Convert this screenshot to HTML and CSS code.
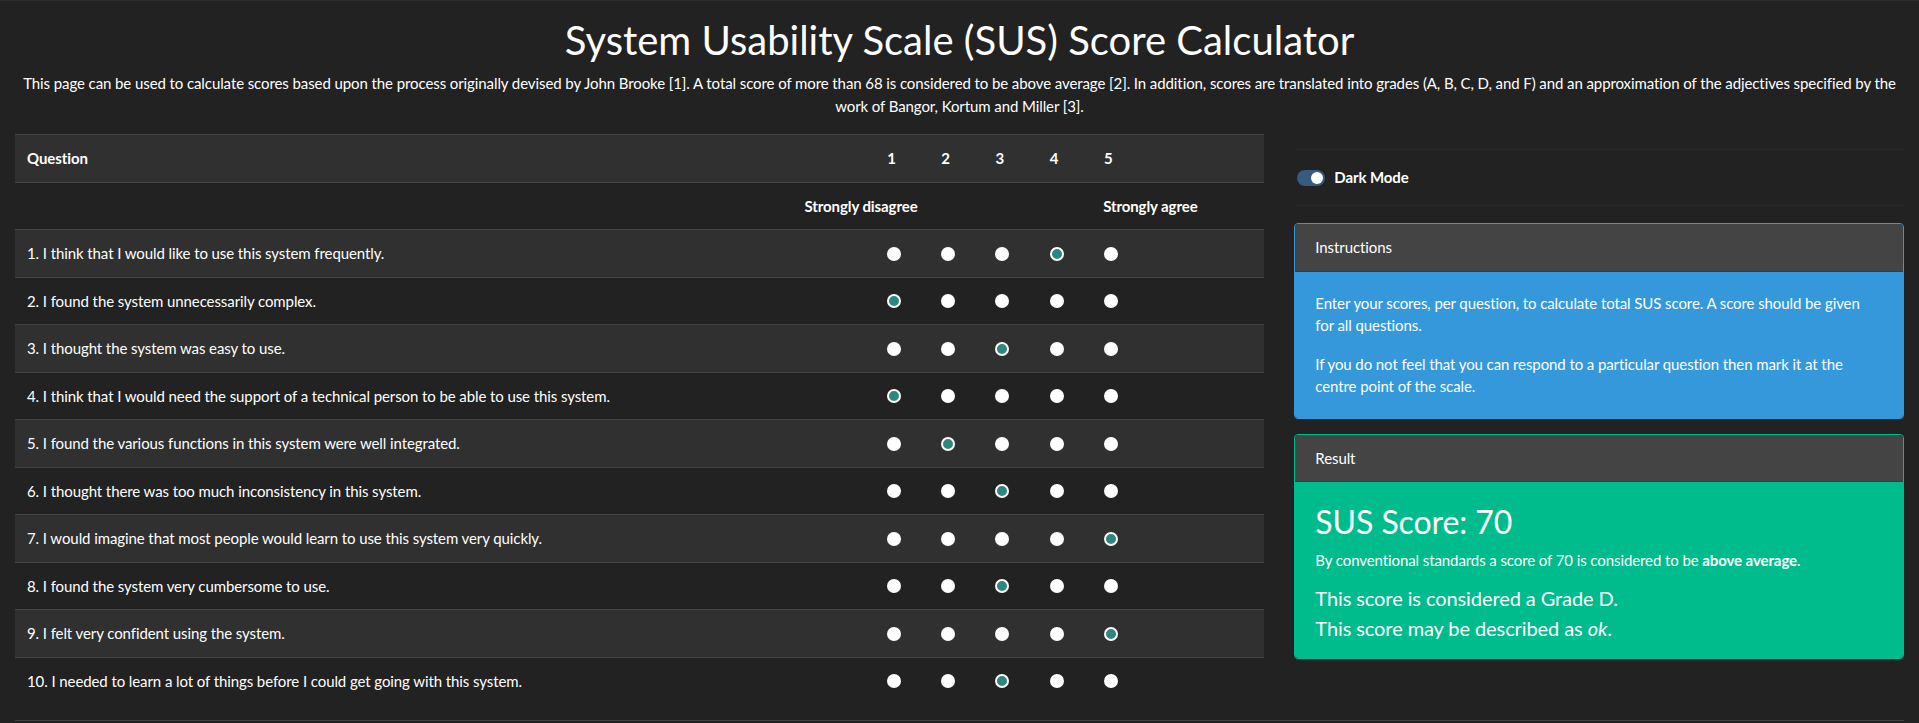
FILE: index.html
```html
<!DOCTYPE html>
<html lang="en">
<head>
<meta charset="utf-8">
<title>System Usability Scale (SUS) Score Calculator</title>
<link rel="stylesheet" href="styles.css">
</head>
<body>
<div class="page">
  <header class="intro">
    <h1 class="title">System Usability Scale (SUS) Score Calculator</h1>
    <p class="lede">This page can be used to calculate scores based upon the process originally devised by John Brooke [1]. A total score of more than 68 is considered to be above average [2]. In addition, scores are translated into grades (A, B, C, D, and F) and an approximation of the adjectives specified by the work of Bangor, Kortum and Miller [3].</p>
  </header>

  <div class="layout">
    <section class="survey">
      <div class="sus-table">
        <div class="tr head">
          <div class="q">Question</div>
          <div class="n">1</div><div class="n">2</div><div class="n">3</div><div class="n">4</div><div class="n">5</div>
          <div class="pad"></div>
        </div>
        <div class="tr scale">
          <div class="lbl-dis">Strongly disagree</div>
          <div class="lbl-agr">Strongly agree</div>
        </div>

        <div class="tr odd">
          <div class="q">1. I think that I would like to use this system frequently.</div>
          <div class="r"><input type="radio" name="q1"></div><div class="r"><input type="radio" name="q1"></div><div class="r"><input type="radio" name="q1"></div><div class="r"><input type="radio" name="q1" checked></div><div class="r"><input type="radio" name="q1"></div>
          <div class="pad"></div>
        </div>
        <div class="tr">
          <div class="q">2. I found the system unnecessarily complex.</div>
          <div class="r"><input type="radio" name="q2" checked></div><div class="r"><input type="radio" name="q2"></div><div class="r"><input type="radio" name="q2"></div><div class="r"><input type="radio" name="q2"></div><div class="r"><input type="radio" name="q2"></div>
          <div class="pad"></div>
        </div>
        <div class="tr odd">
          <div class="q">3. I thought the system was easy to use.</div>
          <div class="r"><input type="radio" name="q3"></div><div class="r"><input type="radio" name="q3"></div><div class="r"><input type="radio" name="q3" checked></div><div class="r"><input type="radio" name="q3"></div><div class="r"><input type="radio" name="q3"></div>
          <div class="pad"></div>
        </div>
        <div class="tr">
          <div class="q">4. I think that I would need the support of a technical person to be able to use this system.</div>
          <div class="r"><input type="radio" name="q4" checked></div><div class="r"><input type="radio" name="q4"></div><div class="r"><input type="radio" name="q4"></div><div class="r"><input type="radio" name="q4"></div><div class="r"><input type="radio" name="q4"></div>
          <div class="pad"></div>
        </div>
        <div class="tr odd">
          <div class="q">5. I found the various functions in this system were well integrated.</div>
          <div class="r"><input type="radio" name="q5"></div><div class="r"><input type="radio" name="q5" checked></div><div class="r"><input type="radio" name="q5"></div><div class="r"><input type="radio" name="q5"></div><div class="r"><input type="radio" name="q5"></div>
          <div class="pad"></div>
        </div>
        <div class="tr">
          <div class="q">6. I thought there was too much inconsistency in this system.</div>
          <div class="r"><input type="radio" name="q6"></div><div class="r"><input type="radio" name="q6"></div><div class="r"><input type="radio" name="q6" checked></div><div class="r"><input type="radio" name="q6"></div><div class="r"><input type="radio" name="q6"></div>
          <div class="pad"></div>
        </div>
        <div class="tr odd">
          <div class="q">7. I would imagine that most people would learn to use this system very quickly.</div>
          <div class="r"><input type="radio" name="q7"></div><div class="r"><input type="radio" name="q7"></div><div class="r"><input type="radio" name="q7"></div><div class="r"><input type="radio" name="q7"></div><div class="r"><input type="radio" name="q7" checked></div>
          <div class="pad"></div>
        </div>
        <div class="tr">
          <div class="q">8. I found the system very cumbersome to use.</div>
          <div class="r"><input type="radio" name="q8"></div><div class="r"><input type="radio" name="q8"></div><div class="r"><input type="radio" name="q8" checked></div><div class="r"><input type="radio" name="q8"></div><div class="r"><input type="radio" name="q8"></div>
          <div class="pad"></div>
        </div>
        <div class="tr odd">
          <div class="q">9. I felt very confident using the system.</div>
          <div class="r"><input type="radio" name="q9"></div><div class="r"><input type="radio" name="q9"></div><div class="r"><input type="radio" name="q9"></div><div class="r"><input type="radio" name="q9"></div><div class="r"><input type="radio" name="q9" checked></div>
          <div class="pad"></div>
        </div>
        <div class="tr">
          <div class="q">10. I needed to learn a lot of things before I could get going with this system.</div>
          <div class="r"><input type="radio" name="q10"></div><div class="r"><input type="radio" name="q10"></div><div class="r"><input type="radio" name="q10" checked></div><div class="r"><input type="radio" name="q10"></div><div class="r"><input type="radio" name="q10"></div>
          <div class="pad"></div>
        </div>
      </div>
    </section>

    <aside class="side">
      <div class="settings">
        <label class="switch">
          <span class="track"><span class="knob"></span></span>
          <span class="switch-label">Dark Mode</span>
        </label>
      </div>

      <div class="card card-info">
        <div class="card-header">Instructions</div>
        <div class="card-body">
          <p>Enter your scores, per question, to calculate total SUS score. A score should be given for all questions.</p>
          <p>If you do not feel that you can respond to a particular question then mark it at the centre point of the scale.</p>
        </div>
      </div>

      <div class="card card-success">
        <div class="card-header">Result</div>
        <div class="card-body">
          <h3 class="score">SUS Score: 70</h3>
          <p class="verdict">By conventional standards a score of 70 is considered to be <strong>above average</strong>.</p>
          <p class="grade">This score is considered a Grade D.</p>
          <p class="grade">This score may be described as <em>ok</em>.</p>
        </div>
      </div>
    </aside>
  </div>

  <footer class="foot"></footer>
</div>
</body>
</html>
```

FILE: styles.css
```css
* { box-sizing: border-box; }

html, body {
  margin: 0;
  padding: 0;
  background: #222222;
}

body {
  font-family: Lato, "Noto Sans", "Liberation Sans", sans-serif;
  font-size: 15px;
  line-height: 1.5;
  letter-spacing: -0.006em;
  color: #ffffff;
  border-top: 1px solid #2c2c2c;
}

.page {
  padding: 15px 15px 0;
}

.intro {
  text-align: center;
}

.title {
  margin: 0 0 8px;
  font-size: 40px;
  font-weight: 400;
  line-height: 1.2;
  letter-spacing: 0;
}

.lede {
  margin: 0 0 17px;
}

.layout {
  display: flex;
  margin: 0 -15px;
}

.survey {
  flex: 0 0 66.6667%;
  max-width: 66.6667%;
  padding: 0 15px;
}

.side {
  flex: 0 0 33.3333%;
  max-width: 33.3333%;
  padding: 0 15px;
}

/* table */
.sus-table {
  margin-bottom: 16px;
}

.tr {
  display: grid;
  grid-template-columns: 1fr repeat(5, 54.2px) 129px;
  align-items: center;
  border-top: 1px solid #444444;
}

.tr.head {
  background: #303030;
  font-weight: 700;
}

.tr.odd {
  background: #303030;
}

.q {
  padding: 12px;
}

.n {
  text-align: center;
  padding: 12px 0;
}

.r {
  display: flex;
  justify-content: center;
  align-items: center;
  padding: 12px 0;
  height: 46.5px;
}

.tr.scale {
  font-weight: 700;
}

.lbl-dis {
  grid-column: 1 / 3;
  text-align: right;
  padding: 12px 1px 12px 0;
}

.lbl-agr {
  grid-column: 6 / 8;
  padding: 12px 0 12px 22px;
}

input[type="radio"] {
  -webkit-appearance: none;
  appearance: none;
  margin: 1px 0 0 5px;
  width: 14px;
  height: 14px;
  border-radius: 50%;
  background: #ffffff;
  border: 0;
}

input[type="radio"]:checked {
  background: #2c8781;
  border: 2px solid #ffffff;
}

/* side column */
.settings {
  margin-top: 15px;
  height: 57px;
  border-top: 1px solid #292929;
  border-bottom: 1px solid #292929;
  display: flex;
  align-items: center;
  padding-left: 3px;
  margin-bottom: 17px;
}

.switch {
  display: flex;
  align-items: center;
  gap: 9px;
  font-weight: 700;
}

.track {
  position: relative;
  width: 28px;
  height: 16px;
  border-radius: 8px;
  background: #375a7f;
}

.knob {
  position: absolute;
  right: 2px;
  top: 2px;
  width: 12px;
  height: 12px;
  border-radius: 50%;
  background: #ffffff;
}

.card {
  border: 1px solid #444;
  border-radius: 4px;
  overflow: hidden;
  margin-bottom: 15px;
}

.card-info { border-color: #3498db; }
.card-success { border-color: #00bc8c; }

.card-header {
  background: #444444;
  padding: 12px 20px;
  border-bottom: 1px solid rgba(0, 0, 0, 0.125);
}

.card-body {
  padding: 20px 24px 20px 20px;
}

.card-info .card-body { background: #3498db; }
.card-success .card-body { background: #00bc8c; padding-bottom: 18px; }

.card-body p {
  margin: 0 0 16px;
}

.card-body p:last-child {
  margin-bottom: 0;
}

.score {
  margin: 0 0 8px;
  padding-top: 1px;
  font-size: 32px;
  font-weight: 400;
  line-height: 1.2;
}

.card-body p.verdict {
  margin-bottom: 14px;
}

.card-body p.grade {
  font-size: 20px;
  line-height: 1.2;
  margin-bottom: 6px;
}

.card-body p.grade:last-child {
  margin-bottom: 0;
}

.foot {
  border-top: 1px solid #444444;
  height: 40px;
}
```
